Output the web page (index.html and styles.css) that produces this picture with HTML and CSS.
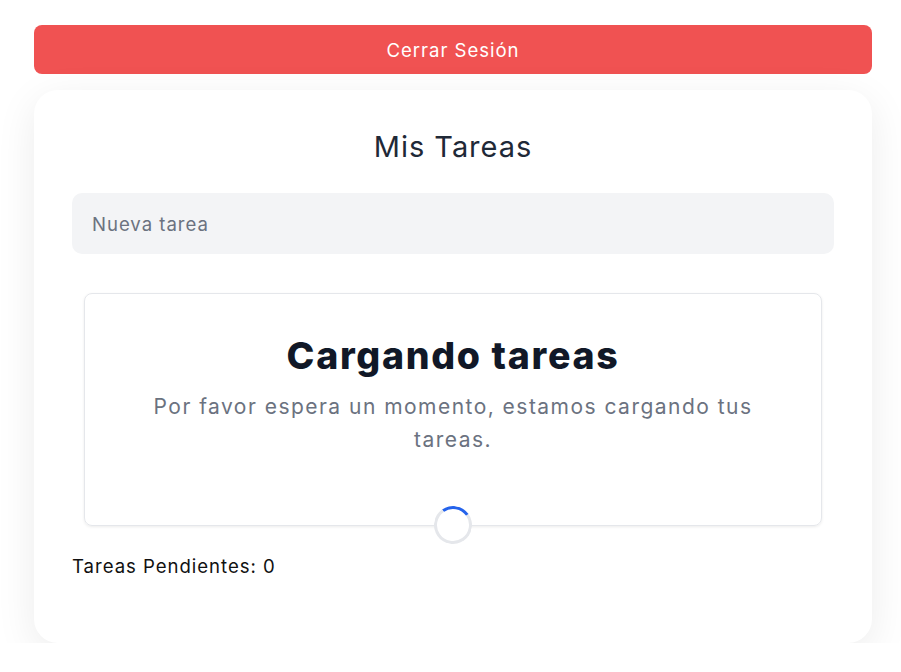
FILE: index.html
```html
<!DOCTYPE html>
<html lang="es">
<head>
<meta charset="utf-8">
<title>Mis Tareas</title>
<link rel="stylesheet" href="styles.css">
</head>
<body>
<div class="page">
  <button class="logout">Cerrar Sesión</button>
  <main class="card">
    <h1 class="title">Mis Tareas</h1>
    <input class="new-task" type="text" placeholder="Nueva tarea">
    <section class="loading">
      <h2 class="loading-title">Cargando tareas</h2>
      <p class="loading-text">Por favor espera un momento, estamos cargando tus tareas.</p>
      <div class="spinner"></div>
    </section>
    <p class="pending">Tareas Pendientes: 0</p>
  </main>
</div>
</body>
</html>
```
FILE: styles.css
```css
* { box-sizing: border-box; }
body {
  margin: 0;
  background: #ffffff;
  font-family: "Inter", "Open Sans", sans-serif;
  letter-spacing: 0.06em;
}
.page {
  padding: 25px 0 0 34px;
  width: 872px;
  display: flex;
  flex-direction: column;
  gap: 16px;
}
.logout {
  height: 49px;
  border: none;
  border-radius: 8px;
  background: #f05252;
  color: #ffffff;
  font-family: inherit;
  letter-spacing: inherit;
  font-size: 18.6px;
  font-weight: 400;
}
.card {
  background: #ffffff;
  border-radius: 24px;
  box-shadow: 0 10px 40px rgba(0, 0, 0, 0.08);
  padding: 36px 38px 63px;
  display: flex;
  flex-direction: column;
}
.title {
  margin: 0;
  text-align: center;
  font-size: 29px;
  line-height: 42px;
  font-weight: 400;
  color: #1f2937;
}
.new-task {
  margin-top: 25px;
  height: 61px;
  border: none;
  border-radius: 10px;
  background: #f3f4f6;
  padding: 0 20px;
  font-family: inherit;
  letter-spacing: inherit;
  font-size: 18.6px;
  color: #111827;
  outline: none;
}
.new-task::placeholder { color: #6b7280; }
.loading {
  margin: 39px 12px 0;
  border: 1px solid #e5e7eb;
  border-radius: 8px;
  box-shadow: 0 1px 3px rgba(0, 0, 0, 0.08);
  padding: 37px 40px 0;
  display: flex;
  flex-direction: column;
  align-items: center;
  text-align: center;
}
.loading-title {
  margin: 0;
  font-size: 37.5px;
  line-height: 50px;
  font-weight: 800;
  letter-spacing: 0.045em;
  color: #111827;
}
.loading-text {
  margin: 9px 0 0;
  font-size: 21px;
  line-height: 33px;
  letter-spacing: 0.07em;
  color: #6b7280;
  max-width: 640px;
}
.spinner {
  position: relative;
  margin: 50px 0 -19px;
  width: 38px;
  height: 38px;
  border-radius: 50%;
  background: #ffffff;
  border: 3px solid #e5e7eb;
  border-top-color: #2563eb;
  transform: rotate(10deg);
}
.pending {
  margin: 27px 0 0;
  font-size: 18.6px;
  line-height: 27px;
  color: #111111;
}
```
